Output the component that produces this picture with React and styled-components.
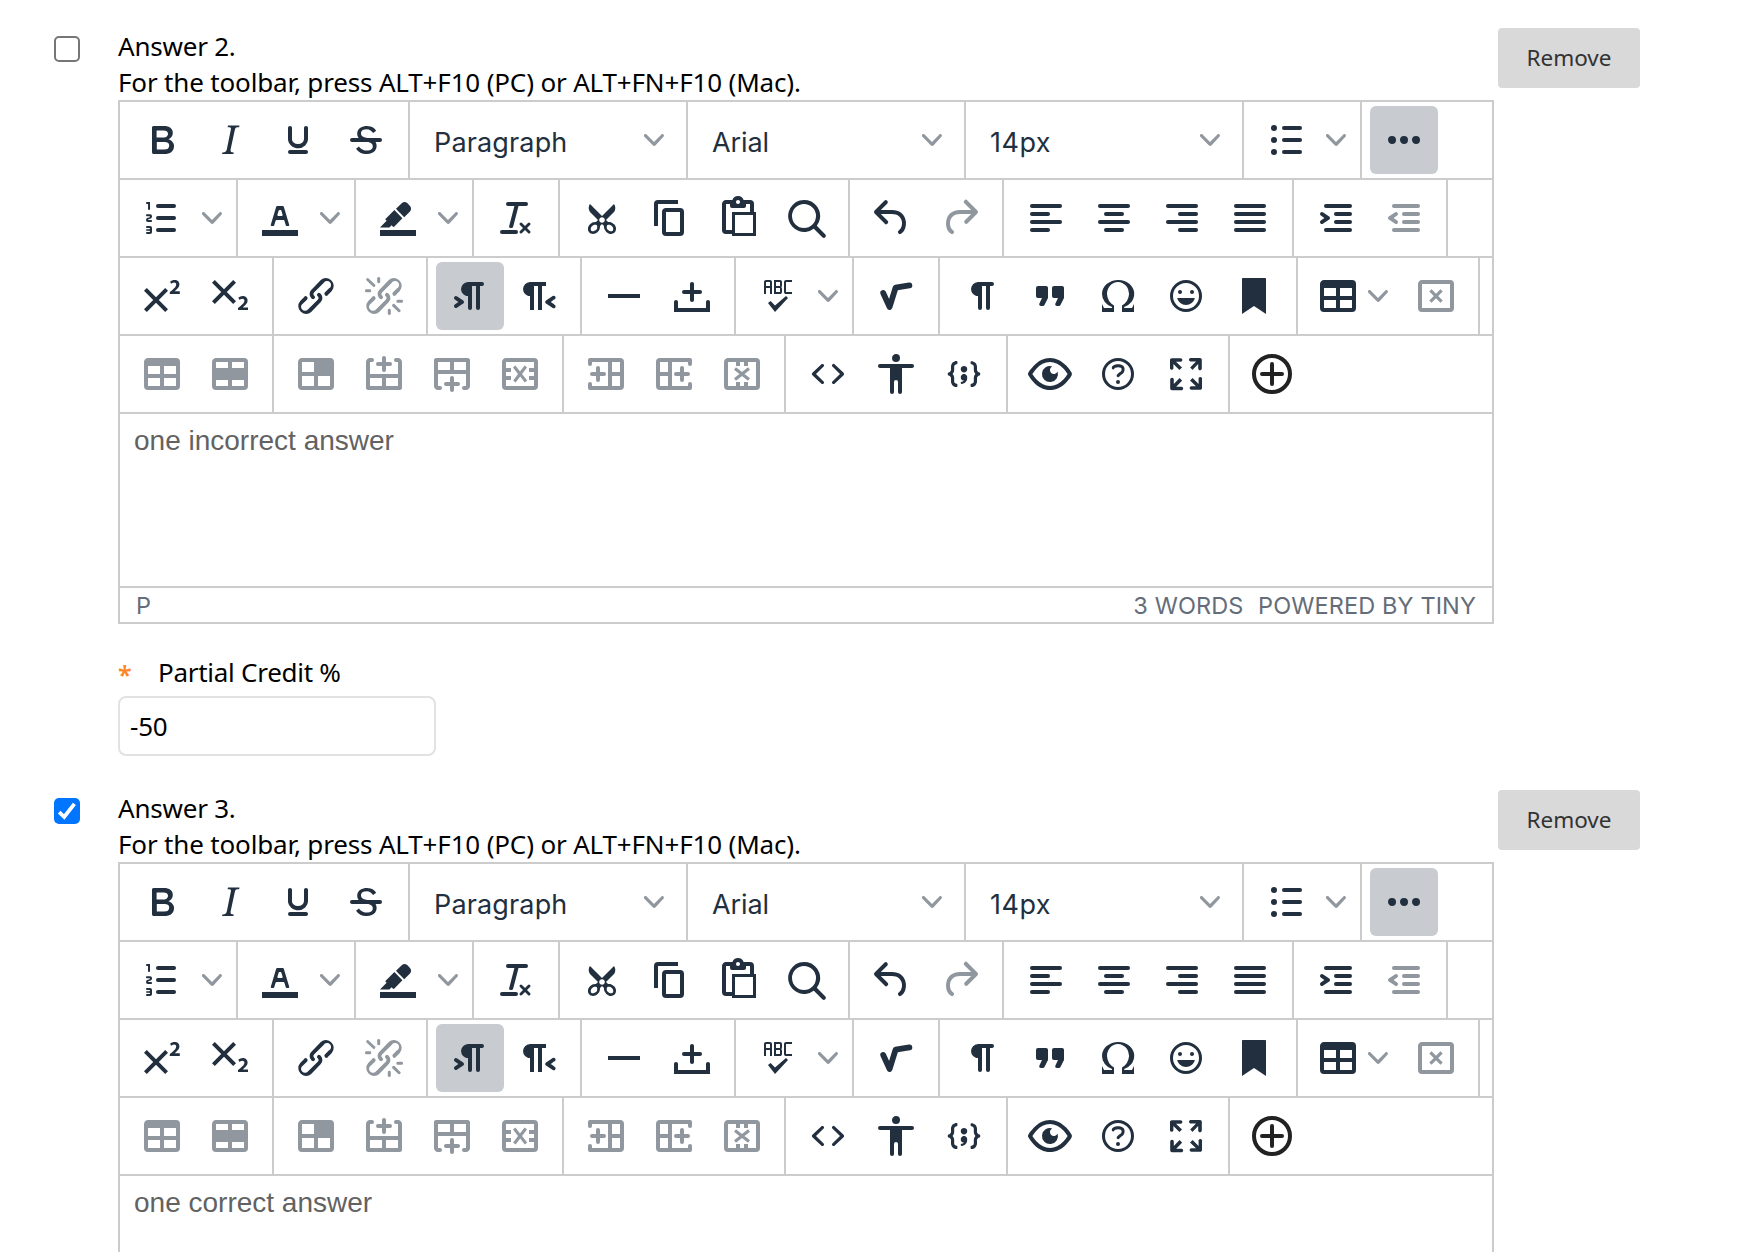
import React from "react";
import styled, { createGlobalStyle, css } from "styled-components";

const INK = "#222f3e";
const LINE = "#cccccc";

const GlobalStyle = createGlobalStyle`
  *, *::before, *::after { box-sizing: border-box; }
  body { margin: 0; background: #fff; }
`;

const Page = styled.main`
  width: 1760px;
  height: 1252px;
  overflow: hidden;
  padding: 28px 0 0 54px;
  background: #fff;
  color: #000;
  font-family: "Noto Sans", "Open Sans", sans-serif;
  font-size: 26px;
  line-height: 36px;
`;

const AnswerBlock = styled.section`
  display: flex;
  align-items: flex-start;
  padding-bottom: 34px;
`;

const CheckBox = styled.span`
  flex: none;
  display: flex;
  width: 26px;
  height: 26px;
  margin: 8px 38px 0 0;
  border-radius: 5px;
  border: ${(p) => (p.$checked ? "none" : "2px solid #767676")};
  background: ${(p) => (p.$checked ? "#0075ff" : "#fff")};
`;

const AnswerMain = styled.div`
  width: 1376px;
  margin-right: 4px;
`;

const AnswerTitle = styled.div`
  height: 36px;
  letter-spacing: -0.22px;
`;

const ToolbarHint = styled.div`
  height: 36px;
  white-space: nowrap;
  letter-spacing: -0.16px;
`;

const RemoveButton = styled.button`
  width: 142px;
  height: 60px;
  padding: 0 0 2px;
  border: none;
  border-radius: 4px;
  background: #d9d9d9;
  color: #333;
  font-family: inherit;
  font-size: 22.5px;
`;

const Editor = styled.div`
  border: 2px solid ${LINE};
  font-family: Inter, sans-serif;
  color: ${INK};
`;

const ToolbarRow = styled.div`
  display: flex;
  height: 78px;
  border-bottom: 2px solid ${LINE};
`;

const Group = styled.div`
  display: flex;
  align-items: center;
  padding: 0 8px;
  border-right: ${(p) => (p.$last ? "none" : `2px solid ${LINE}`)};
  box-sizing: content-box;
`;

const ToolButton = styled.span`
  display: flex;
  align-items: center;
  justify-content: center;
  width: 68px;
  height: 68px;
  border-radius: 6px;
  color: ${(p) => (p.$disabled ? "#90979e" : INK)};
  background: ${(p) => (p.$active ? "#c8cbcf" : "transparent")};
`;

const MenuButton = styled(ToolButton)`
  width: 96px;
  justify-content: flex-start;
  padding-left: 8px;
  gap: 6px;
`;

const SplitArrow = styled.span`
  display: flex;
  align-items: center;
  justify-content: center;
  width: 32px;
  height: 68px;
`;

const SelectBox = styled.span`
  display: flex;
  align-items: center;
  justify-content: space-between;
  width: 260px;
  height: 68px;
  padding: 0 14px 0 16px;
  font-size: 27px;
`;

const SelectLabel = styled.span`
  padding-top: 5px;
  letter-spacing: ${(p) => p.$spacing || "0"};
`;

const Glyph = styled.svg`
  display: block;
  flex: none;
  width: ${(p) => p.$size || 48}px;
  height: ${(p) => p.$size || 48}px;
  fill: currentColor;
  ${(p) => p.$muted && css`color: #90979e;`}
`;

const Content = styled.div`
  height: 172px;
  padding: 11px 14px;
  color: #626262;
  font-family: "Liberation Sans", Arial, sans-serif;
  font-size: 28px;
  line-height: 32px;
`;

const StatusBar = styled.div`
  display: flex;
  align-items: center;
  height: 36px;
  padding: 2px 16px 0;
  border-top: 2px solid ${LINE};
  color: #646d78;
  font-size: 23.5px;
  letter-spacing: 0.12px;
`;

const StatusText = styled.span`
  margin-left: ${(p) => p.$left || "0"};
`;

const FieldLabel = styled.label`
  display: flex;
  height: 36px;
  margin: 30px 0 6px;
  letter-spacing: -0.27px;
`;

const Required = styled.span`
  width: 40px;
  color: #ff8522;
  font-size: 25px;
  font-weight: 600;
  line-height: 41px;
`;

const NumberField = styled.div`
  display: flex;
  align-items: center;
  width: 318px;
  height: 60px;
  padding: 0 0 1px 10px;
  border: 2px solid #e2e2e2;
  border-radius: 8px;
  letter-spacing: -0.2px;
`;

const bar = (x, y, w) => <rect key={`${x}-${y}`} x={x} y={y} width={w} height="2" rx="1" />;
const TABLE_FRAME = "M19 4a2 2 0 012 2v12a2 2 0 01-2 2H5a2 2 0 01-2-2V6c0-1.1.9-2 2-2h14z";
const LINK = "M6.2 12.3a1 1 0 011.4 1.4l-2.1 2a2 2 0 102.7 2.8l4.8-4.8a1 1 0 000-1.4 1 1 0 111.4-1.3 2.9 2.9 0 010 4L9.6 20a3.9 3.9 0 01-5.5-5.5l2-2zm11.6-.6a1 1 0 01-1.4-1.4l2-2a2 2 0 10-2.6-2.8L11 10.3a1 1 0 000 1.4A1 1 0 119.6 13a2.9 2.9 0 010-4L14.4 4a3.9 3.9 0 015.5 5.5l-2 2z";
const ROW_INSERT = "M6 4a1 1 0 110 2H5v6h14V6h-1a1 1 0 010-2h1c1.1 0 2 .9 2 2v13c0 .5-.5 1-1.1 1H4.1C3.5 20 3 19.6 3 19V6c0-1.1.9-2 2-2h1zm5 10H5v4h6v-4zm8 0h-6v4h6v-4zM12 3c.6 0 1 .4 1 1v2h2a1 1 0 010 2h-2v2a1 1 0 01-2 0V8H9a1 1 0 110-2h2V4c0-.6.4-1 1-1z";
const COL_INSERT = "M19 4a2 2 0 012 2v12a2 2 0 01-2 2H4a1 1 0 01-1-1v-2a1 1 0 012 0v1h8V6H5v1a1 1 0 01-2 0V5a1 1 0 011-1h15zm0 9h-4v5h4v-5zM8 8c.5 0 1 .4 1 1v2h2a1 1 0 010 2H9v2a1 1 0 01-2 0v-2H5a1 1 0 010-2h2V9c0-.6.4-1 1-1zm11-2h-4v5h4V6z";

const ICONS = {
  bold: <path d="M7.8 19c-.3 0-.5 0-.6-.2l-.2-.5V5.7c0-.2 0-.4.2-.5l.6-.2h5c1.5 0 2.7.3 3.5 1 .7.6 1.1 1.4 1.1 2.5a3 3 0 01-.6 1.9c-.4.6-1 1-1.6 1.2.4.1.9.3 1.3.6s.8.7 1 1.2c.4.4.5 1 .5 1.6 0 1.3-.4 2.3-1.3 3-.8.7-2.1 1-3.8 1H7.8zm5-8.3c.6 0 1.2-.1 1.6-.5.4-.3.6-.7.6-1.3 0-1.1-.8-1.7-2.3-1.7H9.3v3.5h3.4zm.5 6c.7 0 1.3-.1 1.7-.4.4-.4.6-.9.6-1.5s-.2-1-.7-1.4c-.4-.3-1-.4-2-.4H9.4v3.8h4z" />,
  italic: <path d="M16.7 4.7l-.1.9h-.3c-.6 0-1 0-1.4.3-.3.3-.4.6-.5 1.1l-2.1 9.8v.6c0 .5.4.8 1.4.8h.2l-.2.8H8l.2-.8h.2c1.1 0 1.8-.5 2-1.5l2-9.8.1-.5c0-.6-.4-.8-1.4-.8h-.3l.2-.9h5.8z" />,
  underline: <path d="M16 5c.6 0 1 .4 1 1v5.5a4 4 0 01-.4 1.8l-1 1.4a5.3 5.3 0 01-5.5 1 5 5 0 01-1.6-1c-.5-.4-.8-.9-1.1-1.4a4 4 0 01-.4-1.8V6c0-.6.4-1 1-1s1 .4 1 1v5.5c0 .3 0 .6.2 1l.6.7a3.3 3.3 0 002.2.8 3.4 3.4 0 002.2-.8c.3-.2.4-.5.6-.8l.2-.9V6c0-.6.4-1 1-1zM8 17h8c.6 0 1 .4 1 1s-.4 1-1 1H8a1 1 0 010-2z" />,
  strike: <path d="M15.6 8.5c-.5-.7-1-1.1-1.3-1.3-.6-.4-1.3-.6-2-.6-2.7 0-2.8 1.7-2.8 2.1 0 1.6 1.8 2 3.2 2.3 4.4.9 4.6 2.8 4.6 3.9 0 1.4-.7 4.1-5 4.1A6.2 6.2 0 017 16.4l1.5-1.1c.4.6 1.6 2 3.7 2 1.6 0 2.5-.4 3-1.2.4-.8.3-2-.8-2.6-.7-.4-1.6-.7-2.9-1-1-.2-3.9-.8-3.9-3.6C7.6 6 10.3 5 12.4 5c2.9 0 4.2 1.6 4.7 2.4l-1.5 1.1zM5 11h14a1 1 0 010 2H5a1 1 0 010-2z" />,
  bullets: <>{[5, 11, 17].map((y) => bar(10, y, 10))}{[6, 12, 18].map((y) => <circle key={y} cx="6" cy={y} r="1.5" />)}</>,
  more: <path d="M6 10a2 2 0 00-2 2c0 1.1.9 2 2 2a2 2 0 002-2 2 2 0 00-2-2zm12 0a2 2 0 00-2 2c0 1.1.9 2 2 2a2 2 0 002-2 2 2 0 00-2-2zm-6 0a2 2 0 00-2 2c0 1.1.9 2 2 2a2 2 0 002-2 2 2 0 00-2-2z" />,
  numbers: <>{[5, 11, 17].map((y) => bar(9, y, 10))}<path d="M6 4v3.5c0 .3-.2.5-.5.5a.5.5 0 01-.5-.5V5h-.5a.5.5 0 010-1H6zm-1 8.8l.2.2h1.3c.3 0 .5.2.5.5s-.2.5-.5.5H4.9a1 1 0 01-.9-1V13c0-.4.3-.8.6-1l1.2-.4.2-.3a.2.2 0 00-.2-.2H4.5a.5.5 0 01-.5-.5c0-.3.2-.5.5-.5h1.6c.5 0 .9.4.9 1v.1c0 .4-.3.8-.6 1l-1.2.4-.2.3zM7 17v2c0 .6-.4 1-1 1H4.5a.5.5 0 010-1h1.2c.2 0 .3-.1.3-.3 0-.2-.1-.3-.3-.3H4.4a.4.4 0 110-.8h1.3c.2 0 .3-.1.3-.3 0-.2-.1-.3-.3-.3H4.5a.5.5 0 110-1H6c.6 0 1 .4 1 1z" /></>,
  textColor: <path d="M3 18h18v3H3zM8.7 16h-.8a.5.5 0 01-.5-.6l2.7-9c.1-.3.3-.4.5-.4h2.8c.2 0 .4.1.5.4l2.7 9a.5.5 0 01-.5.6h-.8a.5.5 0 01-.4-.4l-.7-2.2c0-.3-.3-.4-.5-.4h-3.4c-.2 0-.4.1-.5.4l-.7 2.2c0 .3-.2.4-.4.4zm2.6-7.6l-.6 2a.5.5 0 00.5.6h1.6a.5.5 0 00.5-.6l-.6-2c0-.3-.3-.4-.5-.4h-.4c-.2 0-.4.1-.5.4z" />,
  highlight: <path d="M3 18h18v3H3zM7.7 16.7H3l3.3-3.3-.7-.8L10.2 8l4 4.1-4 4.2c-.2.2-.6.2-.8 0l-.6-.7-1.1 1.1zm5-7.5L11 7.4l3-2.9a2 2 0 012.6 0L18 6c.7.7.7 2 0 2.7l-2.9 2.9-1.8-1.8-.5-.6" />,
  clearFormat: <path d="M13.2 6a1 1 0 010 .2l-2.6 10a1 1 0 01-1 .8h-.2a.8.8 0 01-.8-1l2.6-10H8a1 1 0 110-2h9a1 1 0 010 2h-3.8zM5 18h7a1 1 0 010 2H5a1 1 0 010-2zm13 1.5L16.5 18 15 19.5a.7.7 0 01-1-1l1.5-1.5-1.5-1.5a.7.7 0 011-1l1.5 1.5 1.5-1.5a.7.7 0 011 1L17.5 17l1.5 1.5a.7.7 0 01-1 1z" />,
  cut: <path d="M18 15c.6.7 1 1.4 1 2.3 0 .8-.2 1.5-.7 2l-.8.5-1 .2c-.4 0-.8 0-1.2-.3a3.9 3.9 0 01-2.1-2.2c-.2-.5-.3-1-.2-1.5l-1-1-1 1c0 .5 0 1-.2 1.5-.1.5-.4 1-.9 1.4-.3.4-.7.6-1.2.8l-1.2.3c-.4 0-.7 0-1-.2-.3 0-.6-.3-.8-.5-.5-.5-.8-1.2-.7-2 0-.9.4-1.6 1-2.2A3.7 3.7 0 018.6 14H9l1-1-4-4-.5-1a3.3 3.3 0 010-2c0-.4.3-.7.5-1l6 6 6-6 .5 1a3.3 3.3 0 010 2c0 .4-.3.7-.5 1l-4 4 1 1h.5c.4 0 .8 0 1.2.3.5.2.9.4 1.2.8zm-8.5 2.2l.1-.4v-.3-.4a1 1 0 00-.2-.5 1 1 0 00-.4-.2 1.6 1.6 0 00-.8 0 2.6 2.6 0 00-.8.3 2.5 2.5 0 00-.9 1.1l-.1.4v.7l.2.5.5.2h.7a2.5 2.5 0 00.8-.3 2.8 2.8 0 001-1zm2.5-2.8c.4 0 .7-.1 1-.4.3-.3.4-.6.4-1s-.1-.7-.4-1c-.3-.3-.6-.4-1-.4s-.7.1-1 .4c-.3.3-.4.6-.4 1s.1.7.4 1c.3.3.6.4 1 .4zm5.4 4l.2-.5v-.4-.3a2.6 2.6 0 00-.3-.8 2.4 2.4 0 00-.7-.7 2.5 2.5 0 00-.8-.3 1.5 1.5 0 00-.8 0 1 1 0 00-.4.2 1 1 0 00-.2.5 1.5 1.5 0 000 .7v.4l.3.4.3.4a2.8 2.8 0 00.8.5l.4.1h.7l.5-.2z" />,
  copy: <path d="M16 3H6a2 2 0 00-2 2v11h2V5h10V3zm1 4a2 2 0 012 2v10a2 2 0 01-2 2h-7a2 2 0 01-2-2V9c0-1.2.9-2 2-2h7zm0 12V9h-7v10h7z" />,
  paste: <path fillRule="evenodd" d="M18 9V5h-2v1c0 .6-.4 1-1 1H9a1 1 0 01-1-1V5H6v13h3V9h9zM9 20H6a2 2 0 01-2-2V5c0-1.1.9-2 2-2h3.2A3 3 0 0112 1a3 3 0 012.8 2H18a2 2 0 012 2v4h1v12H9v-1zm1.5-9.5v9h9v-9h-9zM12 3a1 1 0 00-1 1c0 .5.4 1 1 1s1-.4 1-1-.4-1-1-1z" />,
  search: <path d="M16 17.3a8 8 0 111.4-1.4l4.3 4.4a1 1 0 01-1.4 1.4l-4.4-4.3zm-5-.3a6 6 0 100-12 6 6 0 000 12z" />,
  undo: <path d="M6.4 8H12c3.7 0 6.2 2 6.8 5.1.6 2.7-.4 5.6-2.3 6.8a1 1 0 01-1-1.8c1.1-.6 1.8-2.7 1.4-4.6-.5-2.1-2.1-3.5-4.9-3.5H6.4l3.3 3.3a1 1 0 11-1.4 1.4l-5-5a1 1 0 010-1.4l5-5a1 1 0 011.4 1.4L6.4 8z" />,
  redo: <path d="M17.6 10H12c-2.8 0-4.4 1.4-4.9 3.5-.4 2 .3 4 1.4 4.6a1 1 0 11-1 1.8c-2-1.2-2.9-4.1-2.3-6.8.6-3 3-5.1 6.8-5.1h5.6l-3.3-3.3a1 1 0 111.4-1.4l5 5a1 1 0 010 1.4l-5 5a1 1 0 01-1.4-1.4l3.3-3.3z" />,
  alignLeft: <>{bar(4, 5, 16)}{bar(4, 9, 10)}{bar(4, 13, 16)}{bar(4, 17, 10)}</>,
  alignCenter: <>{bar(4, 5, 16)}{bar(7, 9, 10)}{bar(4, 13, 16)}{bar(7, 17, 10)}</>,
  alignRight: <>{bar(4, 5, 16)}{bar(10, 9, 10)}{bar(4, 13, 16)}{bar(10, 17, 10)}</>,
  justify: <>{[5, 9, 13, 17].map((y) => bar(4, y, 16))}</>,
  indent: <>{bar(6, 5, 14)}{bar(11, 9, 9)}{bar(11, 13, 9)}{bar(6, 17, 14)}<path d="M4.4 13.2L6.2 12l-1.8-1.2a1 1 0 011.2-1.6l3 2a1 1 0 010 1.6l-3 2a1 1 0 11-1.2-1.6z" /></>,
  outdent: <>{bar(6, 5, 14)}{bar(11, 9, 9)}{bar(11, 13, 9)}{bar(6, 17, 14)}<path d="M8.6 13.2a1 1 0 01-1.2 1.6l-3-2a1 1 0 010-1.6l3-2a1 1 0 011.2 1.6L6.8 12l1.8 1.2z" /></>,
  sup: <path d="M15 9.4L10.4 14l4.6 4.6-1.4 1.4L9 15.4 4.4 20 3 18.6 7.6 14 3 9.4 4.4 8 9 12.6 13.6 8 15 9.4zm5.9 1.6h-5v-1l1-.8 1.7-1.6c.3-.5.5-.9.5-1.3 0-.3 0-.5-.2-.7-.2-.2-.5-.3-.9-.3l-.8.2-.7.4-.4-1.2c.2-.2.5-.4 1-.5.3-.2.8-.2 1.2-.2.8 0 1.4.2 1.8.6.4.4.6 1 .6 1.6 0 .5-.2 1-.5 1.5l-1.3 1.4-.6.5h2.6V11z" />,
  sub: <path d="M10.4 10l4.6 4.6-1.4 1.4L9 11.4 4.4 16 3 14.6 7.6 10 3 5.4 4.4 4 9 8.6 13.6 4 15 5.4 10.4 10zM21 19h-5v-1l1-.8 1.7-1.6c.3-.4.5-.8.5-1.2 0-.3 0-.6-.2-.7-.2-.2-.5-.3-.9-.3a2 2 0 00-.8.2l-.7.3-.4-1.1 1-.6 1.2-.2c.8 0 1.4.3 1.8.7.4.4.6.9.6 1.5s-.2 1.1-.5 1.6a8 8 0 01-1.3 1.3l-.6.6h2.6V19z" />,
  link: <path d={LINK} />,
  unlink: <path d={`${LINK}M7.6 6.3a.8.8 0 01-1 1.1L3.3 4.2a.7.7 0 111-1l3.2 3.1zM5.1 8.6a.8.8 0 010 1.5H3a.8.8 0 010-1.5h2zm5-3.5a.8.8 0 01-1.5 0V3a.8.8 0 011.5 0v2zm6 11.8a.8.8 0 011-1l3.2 3.2a.8.8 0 01-1 1L16 17zm-2.2 2a.8.8 0 011.5 0V21a.8.8 0 01-1.5 0v-2zm5-3.5a.7.7 0 110-1.5H21a.8.8 0 010 1.5h-2z`} />,
  ltr: <path d="M11 5h7a1 1 0 010 2h-1v11a1 1 0 01-2 0V7h-2v11a1 1 0 01-2 0v-6c-.5 0-1 0-1.4-.3A3.4 3.4 0 017.8 10a3.3 3.3 0 010-2.8 3.4 3.4 0 011.8-1.8L11 5zM4.4 16.2L6.2 15l-1.8-1.2a1 1 0 011.2-1.6l3 2a1 1 0 010 1.6l-3 2a1 1 0 11-1.2-1.6z" />,
  rtl: <path d="M8 5h8v2h-2v12h-2V7h-2v12H8v-7c-.5 0-1 0-1.4-.3A3.4 3.4 0 014.8 10a3.3 3.3 0 010-2.8 3.4 3.4 0 011.8-1.8L8 5zm12 11.2a1 1 0 11-1 1.6l-3-2a1 1 0 010-1.6l3-2a1 1 0 111 1.6L18.4 15l1.8 1.2z" />,
  rule: <path d="M4 11h16v2H4z" />,
  nonbreaking: <path d="M11 11H8a1 1 0 110-2h3V6c0-.6.4-1 1-1s1 .4 1 1v3h3c.6 0 1 .4 1 1s-.4 1-1 1h-3v3c0 .6-.4 1-1 1a1 1 0 01-1-1v-3zm10 4v5H3v-5c0-.6.4-1 1-1s1 .4 1 1v3h14v-3c0-.6.4-1 1-1s1 .4 1 1z" />,
  spell: <path d="M6 8v3H5V5c0-.3.1-.5.3-.7.2-.2.4-.3.7-.3h2c.3 0 .5.1.7.3.2.2.3.4.3.7v6H8V8H6zm0-3v2h2V5H6zm13 0h-3v5h3v1h-3a1 1 0 01-.7-.3 1 1 0 01-.3-.7V5c0-.3.1-.5.3-.7.2-.2.4-.3.7-.3h3v1zm-5 1.5l-.1.7c-.1.2-.3.3-.6.3.3 0 .5.1.6.3l.1.7V10c0 .3-.1.5-.3.7a1 1 0 01-.7.3h-3V4h3c.3 0 .5.1.7.3.2.2.3.4.3.7v1.5zM13 10V8h-2v2h2zm0-3V5h-2v2h2zm3 5l1 1-6.5 7L7 15.5l1.3-1 2.2 2.2L16 12z" />,
  math: <path d="M5.6 10.5l3.2 7 3-9.7 6.9-1.1" fill="none" stroke="currentColor" strokeWidth="2.9" strokeLinecap="round" strokeLinejoin="round" />,
  pilcrow: <path d="M10 5h7a1 1 0 010 2h-1v11a1 1 0 01-2 0V7h-2v11a1 1 0 01-2 0v-6c-.5 0-1 0-1.4-.3A3.4 3.4 0 016.8 10a3.3 3.3 0 010-2.8 3.4 3.4 0 011.8-1.8L10 5z" />,
  quote: <path d="M7.5 17h.9c.4 0 .7-.2.9-.6L11 13V8c0-.6-.4-1-1-1H6a1 1 0 00-1 1v4c0 .6.4 1 1 1h2l-1.3 2.7a1 1 0 00.8 1.3zm8 0h.9c.4 0 .7-.2.9-.6L19 13V8c0-.6-.4-1-1-1h-4a1 1 0 00-1 1v4c0 .6.4 1 1 1h2l-1.3 2.7a1 1 0 00.8 1.3z" />,
  omega: <path d="M15 18h4l1-2v4h-6v-3.3l1.4-1a6 6 0 001.8-2.9 6.3 6.3 0 00-.1-4.1 5.8 5.8 0 00-3-3.2c-.6-.3-1.3-.5-2.1-.5a5.1 5.1 0 00-3.9 1.8 6.3 6.3 0 00-1.3 6 6.2 6.2 0 001.8 3l1.4.9V20H4v-4l1 2h4v-.5l-2-1L5.4 15A6.5 6.5 0 014 11c0-1 .2-1.9.6-2.7A7 7 0 016.3 6C7.1 5.4 8 5 9 4.5c1-.3 2-.5 3.1-.5a8.8 8.8 0 015.7 2 7 7 0 011.7 2.3 6 6 0 01.2 4.8c-.2.7-.6 1.3-1 1.9a7.6 7.6 0 01-3.6 2.5v.5z" />,
  emoji: <path d="M9 11c.6 0 1-.4 1-1s-.4-1-1-1a1 1 0 00-1 1c0 .6.4 1 1 1zm6 0c.6 0 1-.4 1-1s-.4-1-1-1a1 1 0 00-1 1c0 .6.4 1 1 1zm-3 5.5c2.1 0 4-1.5 4.4-3.5H7.6c.5 2 2.3 3.5 4.4 3.5zM12 4a8 8 0 100 16 8 8 0 000-16zm0 14.5a6.5 6.5 0 110-13 6.5 6.5 0 010 13z" />,
  bookmark: <path d="M6 3.5v17.5l6-4 6 4V3.5c0-.3-.2-.5-.5-.5h-11c-.3 0-.5.2-.5.5z" />,
  table: <path fillRule="evenodd" d={`${TABLE_FRAME}M5 14v4h6v-4zM13 14v4h6v-4zM13 8v4h6V8zM5 8v4h6V8z`} />,
  tableDelete: <><path fillRule="evenodd" d={`${TABLE_FRAME}M5 6v12h14V6z`} /><path d="M9.2 9.2l5.6 5.6M14.8 9.2l-5.6 5.6" stroke="currentColor" strokeWidth="1.6" /></>,
  rowProps: <path fillRule="evenodd" d={`${TABLE_FRAME}M5 15v3h6v-3zM13 15v3h6v-3zM13 6v3h6V6zM5 6v3h6V6z`} />,
  cellProps: <path fillRule="evenodd" d={`${TABLE_FRAME}M5 13v5h6v-5zM13 13v5h6v-5zM5 6v5h6V6z`} />,
  rowAbove: <path d={ROW_INSERT} />,
  rowBelow: <path d={ROW_INSERT} transform="matrix(1 0 0 -1 0 24)" />,
  rowDelete: <path d="M19 4a2 2 0 012 2v12a2 2 0 01-2 2H5a2 2 0 01-2-2V6c0-1.1.9-2 2-2h14zm0 2H5v3h2.5v2H5v2h2.5v2H5v3h14v-3h-2.5v-2H19v-2h-2.5V9H19V6zm-4.7 1.8l1.2 1L13 12l2.6 3.3-1.2 1-2.3-3-2.3 3-1.2-1L11 12 8.5 8.7l1.2-1 2.3 3 2.3-3z" />,
  colBefore: <path d={COL_INSERT} />,
  colAfter: <path d={COL_INSERT} transform="matrix(-1 0 0 1 24 0)" />,
  colDelete: <><path fillRule="evenodd" d={`${TABLE_FRAME}M5 6v12h4v-2h2v2h2v-2h2v2h4V6h-4v2h-2V6h-2v2H9V6z`} /><path d="M8.5 9.3l7 5.4M15.5 9.3l-7 5.4" stroke="currentColor" strokeWidth="1.6" /></>,
  code: <path d="M9.8 15.7c.3.3.3.8 0 1-.3.4-.9.4-1.2 0l-4.4-4.1a.8.8 0 010-1.2l4.4-4.2c.3-.3.9-.3 1.2 0 .3.3.3.8 0 1.1L6 12l3.8 3.7zM14.2 15.7c-.3.3-.3.8 0 1 .4.4.9.4 1.2 0l4.4-4.1c.3-.3.3-.8 0-1.2l-4.4-4.2a.8.8 0 00-1.2 0c-.3.3-.3.8 0 1.1L18 12l-3.8 3.7z" />,
  accessibility: <path d="M12 2a2 2 0 012 2 2 2 0 01-2 2 2 2 0 01-2-2c0-1.1.9-2 2-2zm8 7h-5v12c0 .6-.4 1-1 1a1 1 0 01-1-1v-5c0-.6-.4-1-1-1a1 1 0 00-1 1v5c0 .6-.4 1-1 1a1 1 0 01-1-1V9H4a1 1 0 110-2h16c.6 0 1 .4 1 1s-.4 1-1 1z" />,
  braces: <path transform="translate(0 -1)" d="M7.1 11a2.8 2.8 0 01-.8 2 2.8 2.8 0 01.8 2v1.7c0 .3.1.6.4.8.2.3.5.4.8.4.3 0 .4.2.4.4v.8c0 .2-.1.4-.4.4-.7 0-1.4-.3-2-.8-.5-.6-.8-1.3-.8-2V15c0-.3-.1-.6-.4-.8-.2-.3-.5-.4-.8-.4a.4.4 0 01-.4-.4v-.8c0-.2.2-.4.4-.4.3 0 .6-.1.8-.4.3-.2.4-.5.4-.8V9.3c0-.7.3-1.4.8-2 .6-.5 1.3-.8 2-.8.3 0 .4.2.4.4v.8c0 .2-.1.4-.4.4-.3 0-.6.1-.8.4-.3.2-.4.5-.4.8V11zm9.8 0V9.3c0-.3-.1-.6-.4-.8-.2-.3-.5-.4-.8-.4a.4.4 0 01-.4-.4V7c0-.2.1-.4.4-.4.7 0 1.4.3 2 .8.5.6.8 1.3.8 2V11c0 .3.1.6.4.8.2.3.5.4.8.4.2 0 .4.2.4.4v.8c0 .2-.2.4-.4.4-.3 0-.6.1-.8.4-.3.2-.4.5-.4.8v1.7c0 .7-.3 1.4-.8 2-.6.5-1.3.8-2 .8a.4.4 0 01-.4-.4v-.8c0-.2.1-.4.4-.4.3 0 .6-.1.8-.4.3-.2.4-.5.4-.8V15a2.8 2.8 0 01.8-2 2.8 2.8 0 01-.8-2zm-3.3-.4c0 .4-.1.8-.5 1.1-.3.3-.7.5-1.1.5-.4 0-.8-.2-1.1-.5-.4-.3-.5-.7-.5-1.1 0-.5.1-.9.5-1.2.3-.3.7-.4 1.1-.4.4 0 .8.1 1.1.4.4.3.5.7.5 1.2zM12 13c.4 0 .8.1 1.1.5.4.3.5.7.5 1.1 0 1-.1 1.6-.5 2a3 3 0 01-1.1 1c-.4.3-.8.4-1.1.4a.5.5 0 01-.5-.5V17a3 3 0 001-.2l.6-.6c-.6 0-1-.2-1.3-.5-.2-.3-.3-.7-.3-1 0-.5.1-1 .5-1.2.3-.4.7-.5 1.1-.5z" />,
  preview: <path d="M3.5 12.5c.5.8 1.1 1.6 1.8 2.3 2 2 4.2 3.2 6.7 3.2s4.7-1.2 6.7-3.2a16.2 16.2 0 002.1-2.8 15.7 15.7 0 00-2.1-2.8c-2-2-4.2-3.2-6.7-3.2a9.3 9.3 0 00-6.7 3.2A16.2 16.2 0 003.2 12c0 .2.2.3.3.5zm-2.4-1l.7-1.2L4 7.8C6.2 5.4 8.9 4 12 4c3 0 5.8 1.4 8.1 3.8a18.2 18.2 0 012.8 3.7v1l-.7 1.2-2.1 2.5c-2.3 2.4-5 3.8-8.1 3.8-3 0-5.8-1.4-8.1-3.8a18.2 18.2 0 01-2.8-3.7 1 1 0 010-1zm12-3.3a2 2 0 102.7 2.6 4 4 0 11-2.6-2.6z" />,
  help: <><circle cx="12" cy="12" r="7.25" fill="none" stroke="currentColor" strokeWidth="1.5" /><path d="M9.6 9.7a.7.7 0 01-.7-.8c0-1.1 1.5-1.8 3.2-1.8 1.8 0 3.2.8 3.2 2.4 0 1.4-.4 2.1-1.5 2.8-.2 0-.3.1-.3.2a2 2 0 00-.8.8.8.8 0 01-1.4-.6c.3-.7.8-1 1.3-1.5l.4-.2c.7-.4.8-.6.8-1.5 0-.5-.6-.9-1.7-.9-.5 0-1 .1-1.4.3-.2 0-.3.1-.3.2v-.2c0 .4-.4.8-.8.8z" /><circle cx="12" cy="16" r="1" /></>,
  fullscreen: <path d="M15.3 10l-1.2-1.3 2.9-3h-2.3a.9.9 0 110-1.7H19c.5 0 .9.4.9.9v4.4a.9.9 0 11-1.8 0V7l-2.9 3zm0 4l3 3v-2.3a.9.9 0 111.7 0V19c0 .5-.4.9-.9.9h-4.4a.9.9 0 110-1.8H17l-3-2.9 1.3-1.2zM10 15.4l-2.9 3h2.3a.9.9 0 110 1.7H5a.9.9 0 01-.9-.9v-4.4a.9.9 0 111.8 0V17l2.9-3 1.2 1.3zM8.7 10L5.7 7v2.3a.9.9 0 01-1.7 0V5c0-.5.4-.9.9-.9h4.4a.9.9 0 010 1.8H7l3 2.9-1.3 1.2z" />,
  add: <g fill="none" stroke="#222" strokeWidth="2" strokeLinecap="round"><circle cx="12" cy="12" r="9" /><path d="M12 7v10M7 12h10" /></g>,
};

/* Each toolbar row is a list of groups; each group is a list of items.
   Suffixes: "-" disabled, "+" active, "v" split arrow, "m" menu button. */
const ROWS = [
  [["bold", "italic", "underline", "strike"], [{ select: "Paragraph", spacing: "0.15px" }], [{ select: "Arial", spacing: "-0.1px" }], [{ select: "14px", spacing: "0.5px" }], ["bullets:v"], ["more:+"]],
  [["numbers:v"], ["textColor:v"], ["highlight:v"], ["clearFormat"], ["cut", "copy", "paste", "search"], ["undo", "redo:-"], ["alignLeft", "alignCenter", "alignRight", "justify"], ["indent", "outdent:-"], []],
  [["sup", "sub"], ["link", "unlink:-"], ["ltr:+", "rtl"], ["rule", "nonbreaking"], ["spell:v"], ["math"], ["pilcrow", "quote", "omega", "emoji", "bookmark"], ["table:m", "tableDelete:-"], []],
  [["table:-", "rowProps:-"], ["cellProps:-", "rowAbove:-", "rowBelow:-", "rowDelete:-"], ["colBefore:-", "colAfter:-", "colDelete:-"], ["code", "accessibility", "braces"], ["preview", "help", "fullscreen"], ["add"]],
];

const Icon = ({ name }) => <Glyph viewBox="0 0 24 24">{ICONS[name]}</Glyph>;

const Chevron = () => (
  <Glyph viewBox="0 0 10 10" $size={20} $muted>
    <path d="M8.7 2.2c.3-.3.8-.3 1 0 .4.4.4.9 0 1.2L5.7 7.8c-.3.3-.9.3-1.2 0L.2 3.4a.8.8 0 010-1.2c.3-.3.8-.3 1.1 0L5 6l3.7-3.8z" />
  </Glyph>
);

function Item({ item }) {
  if (item.select) {
    return (
      <SelectBox>
        <SelectLabel $spacing={item.spacing}>{item.select}</SelectLabel>
        <Chevron />
      </SelectBox>
    );
  }
  const [name, flag] = item.split(":");
  if (flag === "m") {
    return <MenuButton><Icon name={name} /><Chevron /></MenuButton>;
  }
  return (
    <>
      <ToolButton $disabled={flag === "-"} $active={flag === "+"}><Icon name={name} /></ToolButton>
      {flag === "v" && <SplitArrow><Chevron /></SplitArrow>}
    </>
  );
}

function RichTextEditor({ text, words }) {
  return (
    <Editor>
      {ROWS.map((groups, r) => (
        <ToolbarRow key={r}>
          {groups.map((items, g) => (
            <Group key={g} $last={g === groups.length - 1}>
              {items.map((item, i) => <Item key={i} item={item} />)}
            </Group>
          ))}
        </ToolbarRow>
      ))}
      <Content>{text}</Content>
      {words && (
        <StatusBar>
          <StatusText>P</StatusText>
          <StatusText $left="auto">{words}</StatusText>
          <StatusText $left="14.5px">POWERED BY TINY</StatusText>
        </StatusBar>
      )}
    </Editor>
  );
}

function Answer({ title, checked, text, words, credit }) {
  return (
    <AnswerBlock>
      <CheckBox $checked={checked}>
        {checked && (
          <Glyph viewBox="0 0 26 26" $size={26}>
            <path d="M5.2 14.2l5 4.8L20.4 5.8" fill="none" stroke="#fff" strokeWidth="3.8" />
          </Glyph>
        )}
      </CheckBox>
      <AnswerMain>
        <AnswerTitle>{title}</AnswerTitle>
        <ToolbarHint>For the toolbar, press ALT+F10 (PC) or ALT+FN+F10 (Mac).</ToolbarHint>
        <RichTextEditor text={text} words={words} />
        {credit && (
          <>
            <FieldLabel><Required>*</Required>Partial Credit %</FieldLabel>
            <NumberField>{credit}</NumberField>
          </>
        )}
      </AnswerMain>
      <RemoveButton>Remove</RemoveButton>
    </AnswerBlock>
  );
}

export default function App() {
  return (
    <>
      <GlobalStyle />
      <Page>
        <Answer title="Answer 2." text="one incorrect answer" words="3 WORDS" credit="-50" />
        <Answer title="Answer 3." checked text="one correct answer" />
      </Page>
    </>
  );
}
